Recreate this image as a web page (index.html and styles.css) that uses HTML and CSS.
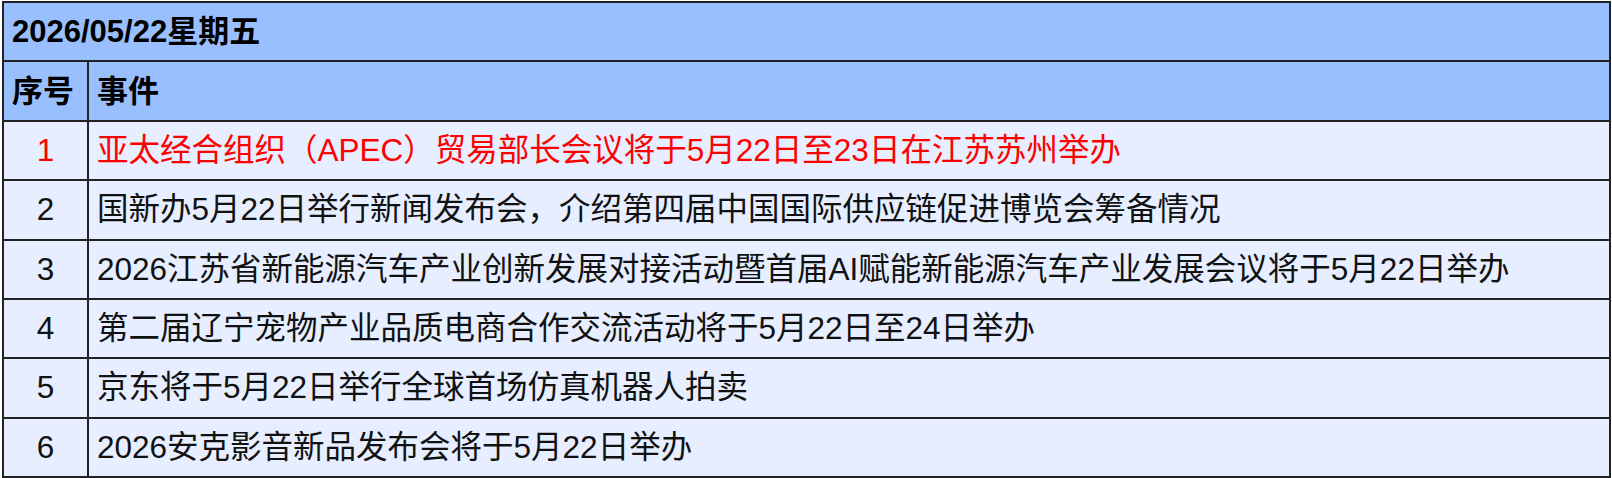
FILE: index.html
```html
<!DOCTYPE html>
<html lang="zh-CN">
<head>
<meta charset="utf-8">
<title>2026/05/22星期五</title>
<link rel="stylesheet" href="styles.css">
</head>
<body>
<table class="events">
  <colgroup><col class="col-no"><col class="col-ev"></colgroup>
  <thead>
    <tr class="title-row"><th colspan="2">2026/05/22星期五</th></tr>
    <tr class="head-row"><th class="h-no">序号</th><th class="h-ev">事件</th></tr>
  </thead>
  <tbody>
    <tr class="hot"><td class="no">1</td><td class="ev">亚太经合组织（APEC）贸易部长会议将于5月22日至23日在江苏苏州举办</td></tr>
    <tr><td class="no">2</td><td class="ev">国新办5月22日举行新闻发布会，介绍第四届中国国际供应链促进博览会筹备情况</td></tr>
    <tr><td class="no">3</td><td class="ev">2026江苏省新能源汽车产业创新发展对接活动暨首届AI赋能新能源汽车产业发展会议将于5月22日举办</td></tr>
    <tr><td class="no">4</td><td class="ev">第二届辽宁宠物产业品质电商合作交流活动将于5月22日至24日举办</td></tr>
    <tr><td class="no">5</td><td class="ev">京东将于5月22日举行全球首场仿真机器人拍卖</td></tr>
    <tr><td class="no">6</td><td class="ev">2026安克影音新品发布会将于5月22日举办</td></tr>
  </tbody>
</table>
</body>
</html>
```
FILE: styles.css
```css
html, body {
  margin: 0;
  padding: 0;
  background: #ffffff;
}
body {
  padding: 1px 0 0 2px;
  font-family: "Liberation Sans", Arial, "Noto Sans CJK SC", sans-serif;
  color: #111111;
}
.events {
  border-collapse: collapse;
  width: 1609px;
  table-layout: fixed;
  font-size: 31.5px;
}
.col-no { width: 85px; }
.events th, .events td {
  border: 2px solid #222222;
  height: 57.4px;
  padding: 0 8px;
  vertical-align: middle;
  white-space: nowrap;
  line-height: 1;
}
.events th {
  background: #99bfff;
  font-weight: 700;
  font-size: 31px;
  text-align: left;
  color: #000000;
}
.events td {
  background: #e6eeff;
  font-weight: 400;
}
.events td.no {
  text-align: center;
  padding: 0;
}
.events tr.hot td {
  color: #ff0000;
}
```
